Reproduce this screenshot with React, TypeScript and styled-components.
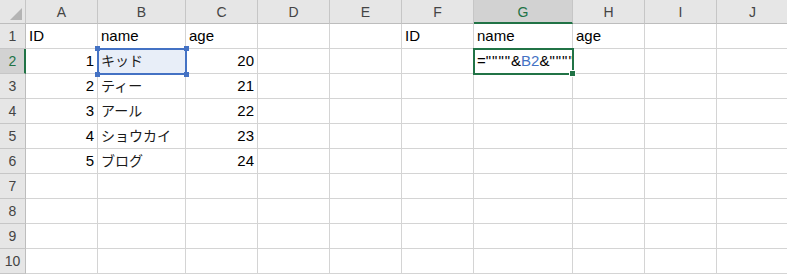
import React from "react";
import styled, { createGlobalStyle } from "styled-components";

const GlobalStyle = createGlobalStyle`
  html, body {
    margin: 0;
    padding: 0;
    background: #ffffff;
    overflow: hidden;
  }
  body {
    font-family: "Liberation Sans", "Noto Sans CJK JP", sans-serif;
  }
`;

const COLS = [
  { key: "A", width: 72 },
  { key: "B", width: 88 },
  { key: "C", width: 72 },
  { key: "D", width: 72 },
  { key: "E", width: 72 },
  { key: "F", width: 72 },
  { key: "G", width: 99 },
  { key: "H", width: 72 },
  { key: "I", width: 72 },
  { key: "J", width: 72 },
];

const GRID_LINE = "#d4d4d4";
const GREEN = "#217346";
const REF_BLUE = "#4472c4";

const Sheet = styled.div`
  display: grid;
  grid-template-columns: 26px ${COLS.map((c) => `${c.width}px`).join(" ")};
  grid-template-rows: 24px repeat(10, 25px);
  width: 787px;
  height: 274px;
  overflow: hidden;
  background: #ffffff;
`;

const Corner = styled.div`
  display: flex;
  align-items: flex-end;
  justify-content: flex-end;
  padding: 0 3px 3px 0;
  box-sizing: border-box;
  background: #e6e6e6;
  border-right: 1px solid #c6c6c6;
  border-bottom: 1px solid #bdbdbd;
`;

const ColHeader = styled.div<{ $selected?: boolean }>`
  display: flex;
  align-items: center;
  justify-content: center;
  box-sizing: border-box;
  font-size: 14px;
  color: ${(p) => (p.$selected ? GREEN : "#444444")};
  background: ${(p) => (p.$selected ? "#d2d2d2" : "#e6e6e6")};
  border-right: 1px solid #c6c6c6;
  border-bottom: ${(p) => (p.$selected ? `2px solid ${GREEN}` : "1px solid #bdbdbd")};
  padding-top: ${(p) => (p.$selected ? "1px" : "0")};
`;

const RowHeader = styled.div<{ $selected?: boolean }>`
  display: flex;
  align-items: center;
  justify-content: center;
  box-sizing: border-box;
  font-size: 14px;
  color: ${(p) => (p.$selected ? GREEN : "#444444")};
  background: ${(p) => (p.$selected ? "#d2d2d2" : "#e6e6e6")};
  border-right: ${(p) => (p.$selected ? `2px solid ${GREEN}` : "1px solid #bdbdbd")};
  border-bottom: 1px solid #c6c6c6;
  padding-left: ${(p) => (p.$selected ? "1px" : "0")};
`;

const Cell = styled.div<{ $align?: "left" | "right"; $fill?: string }>`
  position: relative;
  display: flex;
  align-items: flex-end;
  justify-content: ${(p) => (p.$align === "right" ? "flex-end" : "flex-start")};
  box-sizing: border-box;
  padding: 0 3px 3px 3px;
  font-size: 15px;
  color: #000000;
  white-space: nowrap;
  background: ${(p) => p.$fill || "transparent"};
  border-right: 1px solid ${GRID_LINE};
  border-bottom: 1px solid ${GRID_LINE};
  overflow: visible;
`;

const CellText = styled.span<{ $jp?: boolean }>`
  position: relative;
  z-index: 2;
  line-height: 18px;
  font-size: ${(p) => (p.$jp ? "14px" : "15px")};
  color: ${(p) => (p.$jp ? "#1a1a1a" : "#000000")};
`;

const RefBox = styled.div`
  position: absolute;
  left: -1px;
  top: -1px;
  right: -2px;
  bottom: -2px;
  border: 2px solid ${REF_BLUE};
  z-index: 3;
  pointer-events: none;
`;

const Handle = styled.div<{ $pos: string; $color: string }>`
  position: absolute;
  width: 5px;
  height: 5px;
  background: ${(p) => p.$color};
  ${(p) => p.$pos}
`;

const ActiveBox = styled.div`
  position: absolute;
  left: -1px;
  top: -1px;
  right: -2px;
  bottom: -2px;
  border: 2px solid ${GREEN};
  z-index: 3;
  pointer-events: none;
`;

const RefToken = styled.span`
  color: ${REF_BLUE};
`;

const Quotes = styled.span`
  letter-spacing: 1px;
`;

type CellValue = { text: React.ReactNode; align?: "left" | "right"; jp?: boolean };

const data: Record<string, CellValue> = {
  A1: { text: "ID" },
  B1: { text: "name" },
  C1: { text: "age" },
  F1: { text: "ID" },
  G1: { text: "name" },
  H1: { text: "age" },
  A2: { text: "1", align: "right" },
  B2: { text: "キッド", jp: true },
  C2: { text: "20", align: "right" },
  A3: { text: "2", align: "right" },
  B3: { text: "ティー", jp: true },
  C3: { text: "21", align: "right" },
  A4: { text: "3", align: "right" },
  B4: { text: "アール", jp: true },
  C4: { text: "22", align: "right" },
  A5: { text: "4", align: "right" },
  B5: { text: "ショウカイ", jp: true },
  C5: { text: "23", align: "right" },
  A6: { text: "5", align: "right" },
  B6: { text: "ブログ", jp: true },
  C6: { text: "24", align: "right" },
  G2: {
    text: (
      <>
        =<Quotes>""""</Quotes>&amp;<RefToken>B2</RefToken>&amp;<Quotes>""""</Quotes>
      </>
    ),
  },
};

function CornerTriangle() {
  return (
    <svg width="12" height="12" viewBox="0 0 12 12">
      <polygon points="12,0 12,12 0,12" fill="#b4b4b4" />
    </svg>
  );
}

export default function App() {
  const rows = Array.from({ length: 10 }, (_, i) => i + 1);

  return (
    <>
      <GlobalStyle />
      <Sheet>
        <Corner>
          <CornerTriangle />
        </Corner>
        {COLS.map((c) => (
          <ColHeader key={c.key} $selected={c.key === "G"}>
            {c.key}
          </ColHeader>
        ))}
        {rows.map((r) => (
          <React.Fragment key={r}>
            <RowHeader $selected={r === 2}>{r}</RowHeader>
            {COLS.map((c) => {
              const id = `${c.key}${r}`;
              const v = data[id];
              const isRef = id === "B2";
              const isActive = id === "G2";
              return (
                <Cell key={id} $align={v?.align} $fill={isRef ? "#e8eef8" : undefined}>
                  {v && <CellText $jp={v.jp}>{v.text}</CellText>}
                  {isRef && (
                    <RefBox>
                      <Handle $color={REF_BLUE} $pos="left:-4px;top:-4px;" />
                      <Handle $color={REF_BLUE} $pos="right:-4px;top:-4px;" />
                      <Handle $color={REF_BLUE} $pos="left:-4px;bottom:-4px;" />
                      <Handle $color={REF_BLUE} $pos="right:-4px;bottom:-4px;" />
                    </RefBox>
                  )}
                  {isActive && (
                    <ActiveBox>
                      <Handle
                        $color={GREEN}
                        $pos="right:-4px;bottom:-4px;border:1px solid #fff;"
                      />
                    </ActiveBox>
                  )}
                </Cell>
              );
            })}
          </React.Fragment>
        ))}
      </Sheet>
    </>
  );
}
